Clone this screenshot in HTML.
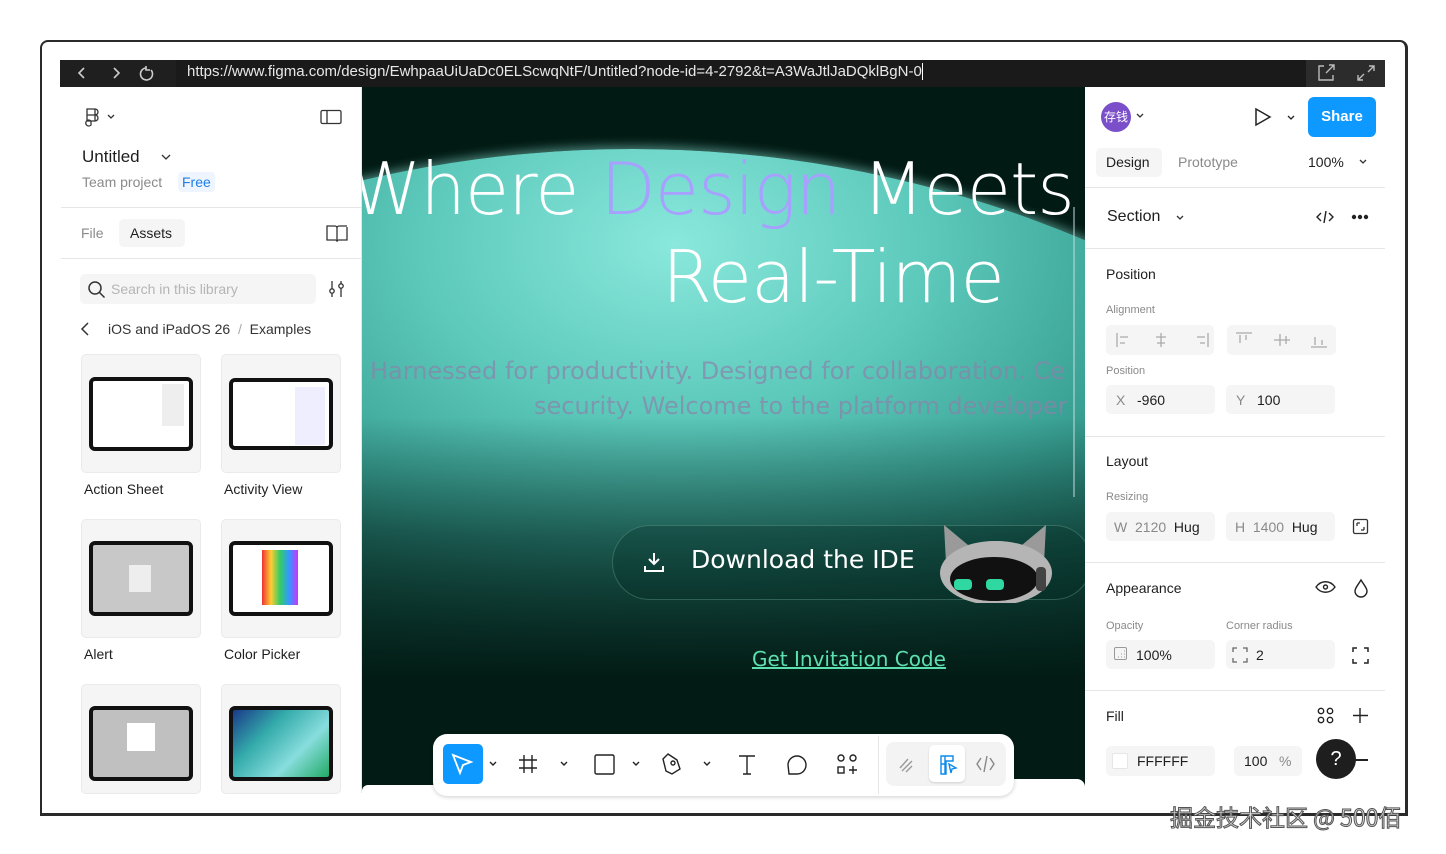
<!DOCTYPE html>
<html><head><meta charset="utf-8"><style>
*{box-sizing:border-box;margin:0;padding:0}
body{width:1446px;height:854px;background:#fff;position:relative;overflow:hidden;font-family:"Liberation Sans","Noto Sans CJK SC",sans-serif;color:#1e1e1e}
.a{position:absolute}
.t{font-size:14px;white-space:nowrap}
.g{color:#8a8a8a}
.box{background:#f5f5f5;border-radius:5px}
svg{display:block}
.hr{height:1px;background:#e6e6e6}
</style></head><body>
<div class="a" style="left:40px;top:40px;width:1368px;height:776px;border:2px solid #2a2a2a;border-right-width:3px;border-bottom-width:3px;border-radius:8px 8px 0 0;"></div>
<div class="a" style="left:60px;top:60px;width:1325px;height:27px;background:#1f1f1f"></div>
<div class="a" style="left:176px;top:60px;width:1130px;height:27px;background:#1a1a1a"></div>
<div class="a" style="left:1306px;top:60px;width:79px;height:27px;background:#2c2c2c"></div>
<svg class="a" style="left:74px;top:64px" width="100" height="18" fill="none" stroke="#ccc" stroke-width="1.6"><path d="M10 4 5 9l5 5"/><path d="M40 4l5 5-5 5"/><path d="M72 4a6 6 0 1 0 5 2M72 2v4h4" /></svg>
<div class="a t" style="left:187px;top:63px;color:#e8e8e8;font-size:15px">https://www.figma.com/design/EwhpaaUiUaDc0ELScwqNtF/Untitled?node-id=4-2792&amp;t=A3WaJtlJaDQklBgN-0<span style="border-left:1px solid #fff"></span></div>
<svg class="a" style="left:1316px;top:63px" width="64" height="20" fill="none" stroke="#bbb" stroke-width="1.4"><path d="M8 3H3v14h14v-5M10 10l8-8M13 2h5v5"/><path d="M42 17l6-6M42 12v5h5M58 3l-6 6M53 3h5v5"/></svg>

<div class="a" style="left:61px;top:87px;width:301px;height:706px;background:#fff;border-right:1px solid #e6e6e6"></div>
<svg class="a" style="left:84px;top:107px" width="34" height="20" fill="none" stroke="#333" stroke-width="1.3"><path d="M3 2h8v6H3zM3 8h8v6H3zM7 14a3 3 0 1 0 0 4V14M11 2a3 3 0 0 1 0 6M11 8a3 3 0 1 1 0 6"/><path d="M24 8l3 3 3-3"/></svg>
<svg class="a" style="left:320px;top:109px" width="22" height="16" fill="none" stroke="#333" stroke-width="1.3"><rect x="1" y="1.5" width="20" height="13" rx="1.5"/><path d="M7 1.5v13"/></svg>
<div class="a t" style="left:82px;top:147px;font-size:17px;font-weight:500">Untitled</div>
<svg class="a" style="left:160px;top:152px" width="12" height="10" fill="none" stroke="#333" stroke-width="1.3"><path d="M2 3l4 4 4-4"/></svg>
<div class="a t g" style="left:82px;top:174px">Team project</div>
<div class="a t" style="left:178px;top:172px;color:#1e7ee8;background:#eef5ff;padding:2px 4px;border-radius:4px">Free</div>
<div class="a hr" style="left:61px;top:207px;width:300px"></div>
<div class="a t g" style="left:81px;top:225px">File</div>
<div class="a box t" style="left:119px;top:219px;width:66px;height:28px;padding:6px 11px;font-weight:500">Assets</div>
<svg class="a" style="left:326px;top:224px" width="22" height="18" fill="none" stroke="#333" stroke-width="1.3"><path d="M1 3v13h8a2 2 0 0 1 2 1V4a2 2 0 0 0-2-2H1zM21 3v13h-8a2 2 0 0 0-2 1"/><path d="M11 4a2 2 0 0 1 2-2h8"/></svg>
<div class="a hr" style="left:61px;top:258px;width:300px"></div>
<div class="a box" style="left:80px;top:274px;width:236px;height:30px"></div>
<svg class="a" style="left:87px;top:280px" width="20" height="20" fill="none" stroke="#333" stroke-width="1.5"><circle cx="8" cy="8" r="6"/><path d="M12.5 12.5l5 5"/></svg>
<div class="a t" style="left:111px;top:281px;color:#b5b5b5">Search in this library</div>
<svg class="a" style="left:327px;top:280px" width="20" height="18" fill="none" stroke="#333" stroke-width="1.3"><path d="M5 1v16M14 1v16"/><circle cx="5" cy="11" r="2.2" fill="#fff"/><circle cx="14" cy="6" r="2.2" fill="#fff"/></svg>
<svg class="a" style="left:79px;top:321px" width="12" height="16" fill="none" stroke="#333" stroke-width="1.5"><path d="M9 2 3 8l6 6"/></svg>
<div class="a t" style="left:108px;top:321px;color:#333">iOS and iPadOS 26 <span style="color:#aaa">&nbsp;/&nbsp;</span> Examples</div>

<div class="a box" style="left:81px;top:354px;width:120px;height:119px;border:1px solid #eaeaea"></div>
<div class="a" style="left:89px;top:377px;width:104px;height:74px;border:4px solid #111;border-radius:6px;background:#fff"></div>
<div class="a" style="left:162px;top:384px;width:22px;height:42px;background:#eee"></div>
<div class="a box" style="left:221px;top:354px;width:120px;height:119px;border:1px solid #eaeaea"></div>
<div class="a" style="left:229px;top:378px;width:104px;height:72px;border:4px solid #111;border-radius:6px;background:#fff"></div>
<div class="a" style="left:295px;top:387px;width:30px;height:58px;background:#eef"></div>
<div class="a t" style="left:84px;top:481px">Action Sheet</div>
<div class="a t" style="left:224px;top:481px">Activity View</div>
<div class="a box" style="left:81px;top:519px;width:120px;height:119px;border:1px solid #eaeaea"></div>
<div class="a" style="left:89px;top:541px;width:104px;height:75px;border:4px solid #111;border-radius:6px;background:#c8c8c8"></div>
<div class="a" style="left:129px;top:565px;width:22px;height:27px;background:#eee"></div>
<div class="a box" style="left:221px;top:519px;width:120px;height:119px;border:1px solid #eaeaea"></div>
<div class="a" style="left:229px;top:541px;width:104px;height:75px;border:4px solid #111;border-radius:6px;background:#fff"></div>
<div class="a" style="left:262px;top:550px;width:36px;height:55px;background:linear-gradient(90deg,#e33,#fc3,#3c6,#39f,#c3f)"></div>
<div class="a t" style="left:84px;top:646px">Alert</div>
<div class="a t" style="left:224px;top:646px">Color Picker</div>
<div class="a box" style="left:81px;top:684px;width:120px;height:110px;border:1px solid #eaeaea"></div>
<div class="a" style="left:89px;top:706px;width:104px;height:75px;border:4px solid #111;border-radius:6px;background:#c0c0c0"></div>
<div class="a" style="left:127px;top:723px;width:28px;height:28px;background:#fff"></div>
<div class="a box" style="left:221px;top:684px;width:120px;height:110px;border:1px solid #eaeaea"></div>
<div class="a" style="left:229px;top:706px;width:104px;height:75px;border:4px solid #111;border-radius:6px;background:linear-gradient(135deg,#1a3a8a,#3aa,#8dd,#2a6)"></div>

<!-- canvas -->
<div class="a" style="left:362px;top:87px;width:723px;height:706px;overflow:hidden;background:#021a14">
  <div class="a" style="left:-790px;top:62px;width:2120px;height:1900px;border-radius:50%;background:radial-gradient(ellipse 40% 30% at 52% 5%,#8ae8dc 0%,#5cc9bb 30%,#3aa295 55%,#1d6a5e 80%,#063229 100%);box-shadow:0 -3px 10px rgba(160,255,240,.45)"></div>
  <div class="a" style="left:0;top:330px;width:723px;height:400px;background:linear-gradient(180deg,rgba(2,30,24,0),rgba(2,30,24,.55) 30%,#021c15 65%)"></div>
  <div class="a" style="left:-12px;top:60px;font-family:'DejaVu Sans',sans-serif;font-size:72px;font-weight:300;color:#fff;white-space:nowrap;letter-spacing:-1px">Where <span style="color:#a7a0ff">Design</span> Meets</div>
  <div class="a" style="left:300px;top:148px;font-family:'DejaVu Sans',sans-serif;font-size:72px;font-weight:300;color:#fff;white-space:nowrap;letter-spacing:-1px">Real-Time</div>
  <div class="a" style="left:8px;top:270px;font-family:'DejaVu Sans',sans-serif;font-size:24px;color:rgba(140,130,170,.7);white-space:nowrap">Harnessed for productivity. Designed for collaboration. Ce</div>
  <div class="a" style="left:172px;top:305px;font-family:'DejaVu Sans',sans-serif;font-size:24px;color:rgba(140,130,170,.7);white-space:nowrap">security. Welcome to the platform developer</div>
  <div class="a" style="left:711px;top:120px;width:2px;height:290px;background:rgba(200,220,220,.5)"></div>
  <div class="a" style="left:250px;top:438px;width:480px;height:75px;border-radius:40px;border:1px solid rgba(120,180,160,.35);background:rgba(0,40,30,.25)"></div>
  <svg class="a" style="left:280px;top:463px" width="24" height="24" fill="none" stroke="#fff" stroke-width="2"><path d="M12 3v11M7 9l5 5 5-5M3 16v5h18v-5"/></svg>
  <div class="a" style="left:329px;top:458px;font-family:'DejaVu Sans',sans-serif;font-size:25px;color:#fff;white-space:nowrap">Download the IDE</div>
  <svg class="a" style="left:574px;top:436px" width="122" height="80"><path d="M10 40 8 2 32 22 Q58 14 86 22 L110 2 108 40 Z" fill="#9a9a9a"/><ellipse cx="60" cy="50" rx="56" ry="32" fill="#b5b5b5"/><ellipse cx="58" cy="56" rx="44" ry="22" fill="#111"/><rect x="18" y="56" width="18" height="11" rx="4" fill="#2ed8a0"/><rect x="50" y="56" width="18" height="11" rx="4" fill="#2ed8a0"/><rect x="100" y="44" width="10" height="24" rx="4" fill="#444"/></svg>
  <div class="a" style="left:390px;top:560px;font-family:'DejaVu Sans',sans-serif;font-size:20px;color:#5de0b0;text-decoration:underline;white-space:nowrap">Get Invitation Code</div>
  <div class="a" style="left:0;top:698px;width:80px;height:8px;background:#fff;border-radius:6px 6px 0 0"></div>
  <div class="a" style="left:640px;top:692px;width:83px;height:14px;background:#fff;border-radius:8px 8px 0 0"></div>
</div>

<!-- toolbar -->
<div class="a" style="left:433px;top:734px;width:581px;height:62px;background:#fff;border-radius:14px;box-shadow:0 1px 4px rgba(0,0,0,.2)"></div>
<div class="a" style="left:443px;top:744px;width:40px;height:40px;background:#0d99ff;border-radius:5px"></div>
<svg class="a" style="left:443px;top:744px" width="440" height="40" fill="none" stroke="#222" stroke-width="1.4">
<path d="M10 11l18 7-8 3-3 8z" stroke="#fff" stroke-width="1.8"/>
<path d="M47 18l3 3 3-3M118 18l3 3 3-3M190 18l3 3 3-3M261 18l3 3 3-3"/>
<path d="M81 11v18M89 11v18M76 16h18M76 24h18"/>
<rect x="152" y="11" width="19" height="19" rx="1.5"/>
<path d="M225 10l9 6 3 9-8 5-6-3-3-12z"/><circle cx="230" cy="19" r="2"/>
<path d="M296 12h16M304 12v18M300 30h8"/>
<path d="M346 30h8a9 9 0 1 0-9-9z"/>
<circle cx="398" cy="14" r="3"/><circle cx="410" cy="14" r="3"/><rect x="395" y="23" width="6" height="6"/><path d="M410 22v8M406 26h8"/>
</svg>
<div class="a" style="left:878px;top:736px;width:1px;height:58px;background:#e6e6e6"></div>
<div class="a" style="left:886px;top:742px;width:120px;height:44px;background:#f3f3f3;border-radius:8px"></div>
<div class="a" style="left:929px;top:745px;width:36px;height:37px;background:#fff;border-radius:5px;box-shadow:0 1px 2px rgba(0,0,0,.15)"></div>
<svg class="a" style="left:890px;top:744px" width="110" height="40" fill="none" stroke-width="1.4">
<path d="M10 24l8-9M12 27l10-10M16 28l6-6" stroke="#999"/>
<path d="M51 12h12v5h-7v13h-5zM55 12v18M51 20h5" stroke="#0d8ae8"/><path d="M59 20l7 4-4 1-1 4z" stroke="#0d8ae8"/>
<path d="M91 14l-4 6 4 6M100 14l4 6-4 6M97 12l-3 16" stroke="#888"/>
</svg>

<!-- right panel -->
<div class="a" style="left:1085px;top:87px;width:300px;height:706px;background:#fff"></div>
<div class="a" style="left:1101px;top:102px;width:30px;height:30px;border-radius:50%;background:#7b4fc9;color:#fff;font-size:12px;line-height:30px;text-align:center;font-family:'Noto Sans CJK SC',sans-serif">存钱</div>
<svg class="a" style="left:1135px;top:112px" width="10" height="8" fill="none" stroke="#333" stroke-width="1.3"><path d="M2 2l3 3 3-3"/></svg>
<svg class="a" style="left:1253px;top:107px" width="46" height="20" fill="none" stroke="#222" stroke-width="1.5"><path d="M3 2l14 8-14 8z"/><path d="M35 9l3 3 3-3" stroke-width="1.3"/></svg>
<div class="a" style="left:1308px;top:97px;width:68px;height:40px;background:#0d99ff;border-radius:6px;color:#fff;font-size:15px;font-weight:bold;line-height:40px;text-align:center">Share</div>
<div class="a box t" style="left:1096px;top:148px;width:66px;height:29px;padding:6px 10px;font-weight:500">Design</div>
<div class="a t g" style="left:1178px;top:154px">Prototype</div>
<div class="a t" style="left:1308px;top:154px">100%</div>
<svg class="a" style="left:1358px;top:158px" width="10" height="8" fill="none" stroke="#333" stroke-width="1.3"><path d="M2 2l3 3 3-3"/></svg>
<div class="a hr" style="left:1085px;top:187px;width:300px"></div>
<div class="a t" style="left:1107px;top:208px;font-size:16px;font-weight:500">Section</div>
<svg class="a" style="left:1175px;top:214px" width="10" height="8" fill="none" stroke="#333" stroke-width="1.3"><path d="M2 2l3 3 3-3"/></svg>
<svg class="a" style="left:1316px;top:208px" width="56" height="18" fill="none" stroke="#222" stroke-width="1.4"><path d="M5 5 1 9l4 4M13 5l4 4-4 4M10 3 8 15"/><circle cx="38" cy="9" r="1.5" fill="#222"/><circle cx="44" cy="9" r="1.5" fill="#222"/><circle cx="50" cy="9" r="1.5" fill="#222"/></svg>
<div class="a hr" style="left:1085px;top:248px;width:300px"></div>
<div class="a t" style="left:1106px;top:266px;font-weight:500">Position</div>
<div class="a t g" style="left:1106px;top:304px;font-size:11px">Alignment</div>
<div class="a box" style="left:1106px;top:325px;width:108px;height:30px"></div>
<div class="a box" style="left:1227px;top:325px;width:109px;height:30px"></div>
<svg class="a" style="left:1106px;top:325px" width="230" height="30" fill="none" stroke="#aaa" stroke-width="1.3"><path d="M11 8v14M14 12h8M14 18h5M55 8v14M50 12h10M51 18h8M102 8v14M91 12h8M94 18h5M130 8h16M134 10v8M140 10v5M174 9v12M168 15h16M180 11v8M205 22h16M209 12v8M216 15v5"/></svg>
<div class="a t g" style="left:1106px;top:365px;font-size:11px">Position</div>
<div class="a box t" style="left:1106px;top:385px;width:109px;height:29px;padding:7px 10px"><span class="g">X</span>&nbsp;&nbsp; -960</div>
<div class="a box t" style="left:1226px;top:385px;width:109px;height:29px;padding:7px 10px"><span class="g">Y</span>&nbsp;&nbsp; 100</div>
<div class="a hr" style="left:1085px;top:436px;width:300px"></div>
<div class="a t" style="left:1106px;top:453px;font-weight:500">Layout</div>
<div class="a t g" style="left:1106px;top:491px;font-size:11px">Resizing</div>
<div class="a box t" style="left:1106px;top:512px;width:109px;height:29px;padding:7px 8px"><span class="g">W&nbsp; 2120</span>&nbsp; Hug</div>
<div class="a box t" style="left:1226px;top:512px;width:109px;height:29px;padding:7px 9px"><span class="g">H&nbsp; 1400</span>&nbsp; Hug</div>
<svg class="a" style="left:1352px;top:518px" width="18" height="18" fill="none" stroke="#333" stroke-width="1.3"><rect x="1.5" y="1.5" width="14" height="14" rx="1.5"/><path d="M5 5h3M5 5v3M12 12h-3M12 12v-3"/></svg>
<div class="a hr" style="left:1085px;top:562px;width:300px"></div>
<div class="a t" style="left:1106px;top:580px;font-weight:500">Appearance</div>
<svg class="a" style="left:1314px;top:578px" width="56" height="20" fill="none" stroke="#222" stroke-width="1.4"><path d="M2 9c5-7 14-7 19 0c-5 7-14 7-19 0z"/><circle cx="11.5" cy="9" r="2"/><path d="M47 2c-3 5-6 8-6 11a6 6 0 0 0 12 0c0-3-3-6-6-11z"/></svg>
<div class="a t g" style="left:1106px;top:620px;font-size:11px">Opacity</div>
<div class="a t g" style="left:1226px;top:620px;font-size:11px">Corner radius</div>
<div class="a box t" style="left:1106px;top:640px;width:109px;height:29px;padding:7px 30px">100%</div>
<svg class="a" style="left:1113px;top:646px" width="16" height="16" fill="none" stroke="#999" stroke-width="1"><rect x="1.5" y="1.5" width="12" height="12" rx="1.5"/><path d="M5 11h1M8 11h1M11 11h1M8 8h1M11 8h1M11 5h1"/></svg>
<div class="a box t" style="left:1226px;top:640px;width:109px;height:29px;padding:7px 30px">2</div>
<svg class="a" style="left:1232px;top:647px" width="16" height="16" fill="none" stroke="#666" stroke-width="1.3"><path d="M1 5V1h4M11 1h4v4M15 11v4h-4M5 15H1v-4"/></svg>
<svg class="a" style="left:1352px;top:647px" width="17" height="17" fill="none" stroke="#222" stroke-width="1.5"><path d="M1 5V1h4M12 1h4v4M16 12v4h-4M5 16H1v-4"/></svg>
<div class="a hr" style="left:1085px;top:690px;width:300px"></div>
<div class="a t" style="left:1106px;top:708px;font-weight:500">Fill</div>
<svg class="a" style="left:1317px;top:707px" width="54" height="18" fill="none" stroke="#222" stroke-width="1.4"><circle cx="4" cy="4" r="2.7"/><circle cx="13" cy="4" r="2.7"/><circle cx="4" cy="13" r="2.7"/><circle cx="13" cy="13" r="2.7"/><path d="M43 1v15M36 8.5h15"/></svg>
<div class="a box" style="left:1106px;top:746px;width:109px;height:30px"></div>
<div class="a box" style="left:1234px;top:746px;width:68px;height:30px"></div>
<div class="a" style="left:1112px;top:753px;width:16px;height:16px;background:#fff;border:1px solid #e6e6e6;border-radius:2px"></div>
<div class="a t" style="left:1137px;top:753px">FFFFFF</div>
<div class="a t" style="left:1244px;top:753px">100 &nbsp;&nbsp;<span class="g">%</span></div>
<div class="a" style="left:1352px;top:759px;width:16px;height:1.5px;background:#222"></div>
<div class="a" style="left:1316px;top:739px;width:40px;height:40px;border-radius:50%;background:#1e1e1e;color:#fff;font-size:20px;text-align:center;line-height:40px">?</div>

<div class="a" style="left:1170px;top:800px;height:34px;overflow:hidden;font-family:'Noto Sans CJK SC',sans-serif;font-size:23px;line-height:32px;color:#ddd;-webkit-text-stroke:1px #555;white-space:nowrap">掘金技术社区 @ 500佰</div>
</body></html>
